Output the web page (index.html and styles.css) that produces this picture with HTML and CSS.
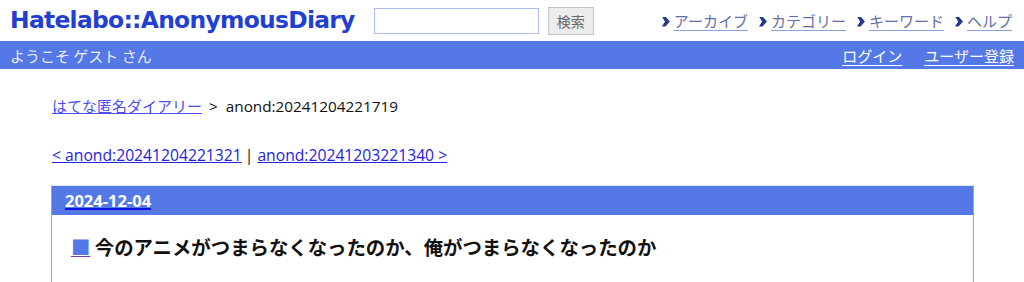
FILE: index.html
```html
<!DOCTYPE html>
<html lang="ja">
<head>
<meta charset="utf-8">
<title>anond:20241204221719</title>
<link rel="stylesheet" href="styles.css">
</head>
<body>
<header class="top">
  <h1 class="logo"><a href="#">Hatelabo::AnonymousDiary</a></h1>
  <form class="search">
    <input class="search-box" type="text">
    <button class="search-btn" type="button">検索</button>
  </form>
  <nav class="nav">
    <a href="#" class="nav-item"><span class="arrow"></span><span class="nav-link">アーカイブ</span></a>
    <a href="#" class="nav-item"><span class="arrow"></span><span class="nav-link">カテゴリー</span></a>
    <a href="#" class="nav-item"><span class="arrow"></span><span class="nav-link">キーワード</span></a>
    <a href="#" class="nav-item"><span class="arrow"></span><span class="nav-link">ヘルプ</span></a>
  </nav>
</header>
<div class="bar">
  <span class="welcome">ようこそ ゲスト さん</span>
  <div class="bar-links">
    <a href="#">ログイン</a>
    <a href="#">ユーザー登録</a>
  </div>
</div>
<main class="main">
  <p class="crumb"><a href="#">はてな匿名ダイアリー</a><span class="sep">&gt;</span>anond:20241204221719</p>
  <p class="pager"><a href="#">&lt; anond:20241204221321</a><span class="bar-sep">|</span><a href="#">anond:20241203221340 &gt;</a></p>
  <section class="day">
    <h2 class="day-head"><a href="#">2024-12-04</a></h2>
    <h3 class="entry-title"><a href="#" class="sq">■</a> 今のアニメがつまらなくなったのか、俺がつまらなくなったのか</h3>
  </section>
</main>
</body>
</html>
```
FILE: styles.css
```css
html, body {
  margin: 0;
  padding: 0;
  background: #fff;
}
body {
  font-family: "Open Sans", "Noto Sans CJK JP", sans-serif;
  color: #111;
  overflow: hidden;
}
.top {
  height: 41px;
  display: flex;
  align-items: center;
  padding: 0 12px 0 10px;
}
.logo {
  margin: 0;
  font-family: "DejaVu Sans", sans-serif;
  font-weight: bold;
  font-size: 23.4px;
  letter-spacing: -0.7px;
  line-height: 1;
}
.logo a {
  color: #1f40d2;
  text-decoration: none;
}
.search {
  display: flex;
  align-items: center;
  margin-left: auto;
}
.search-box {
  width: 161px;
  height: 22px;
  border: 1px solid #a9bdf3;
  padding: 1px;
  margin: 0;
  box-sizing: content-box;
}
.search-btn {
  margin-left: 9px;
  width: 46px;
  height: 28px;
  border: 1px solid #c4c4c4;
  background: #ececec;
  color: #666;
  font-family: "Noto Sans CJK JP", sans-serif;
  font-size: 14px;
  padding: 0;
}
.nav {
  display: flex;
  margin-left: 68px;
  gap: 11px;
}
.nav-item {
  display: flex;
  align-items: center;
  text-decoration: none;
  font-family: "Noto Sans CJK JP", sans-serif;
  font-size: 15px;
}
.nav-link {
  color: #5f70a6;
  text-decoration: underline;
  text-decoration-color: #8aa0dd;
  text-underline-offset: 3px;
}
.arrow {
  width: 8px;
  height: 10px;
  margin-right: 4px;
  position: relative;
  top: 1px;
  background:
    radial-gradient(circle, #24398a 0.95px, transparent 1.25px) 0 0 / 2px 2px;
  clip-path: polygon(0 0, 45% 0, 100% 50%, 45% 100%, 0 100%, 40% 50%);
}
.bar {
  height: 28px;
  background: #5479e6;
  display: flex;
  align-items: center;
  justify-content: space-between;
  padding: 0 10px;
  font-family: "Noto Sans CJK JP", sans-serif;
  font-size: 15px;
}
.welcome {
  color: #e9edfc;
}
.bar-links {
  display: flex;
  gap: 22px;
}
.bar-links a {
  color: #fff;
  text-underline-offset: 3px;
}
.main {
  padding: 0 50px 0 51px;
}
.crumb {
  margin: 23px 0 0 1px;
  font-size: 15.3px;
  line-height: 28px;
}
.crumb a {
  color: #4b4ef2;
  font-family: "Noto Sans CJK JP", sans-serif;
  font-size: 15px;
}
.sep {
  margin: 0 8px 0 7px;
}
.pager {
  margin: 21px 0 0 1px;
  font-size: 15.7px;
  line-height: 28px;
}
.pager a {
  color: #2323dd;
}
.bar-sep {
  margin: 0 4px 0 3px;
}
.day {
  margin-top: 16px;
  border-left: 1px solid #8ea5ee;
  border-right: 1px solid #8ea5ee;
  border-top: 1px solid #dfe6fb;
  height: 96px;
}
.day-head {
  margin: 0;
  height: 29px;
  background: #5479e6;
  display: flex;
  align-items: center;
  padding-left: 13px;
  font-size: 16.5px;
  font-weight: bold;
}
.day-head a {
  color: #fff;
  text-decoration: underline;
  text-decoration-color: #1010e8;
  text-decoration-thickness: 2px;
  text-underline-offset: 1px;
}
.entry-title {
  margin: 18px 0 0 19px;
  font-family: "Noto Sans CJK JP", sans-serif;
  font-size: 19.4px;
  font-weight: bold;
  line-height: 28px;
  color: #111;
}
.sq {
  color: #5479e6;
  text-decoration: underline;
  text-decoration-color: #7b3fb0;
}
```
